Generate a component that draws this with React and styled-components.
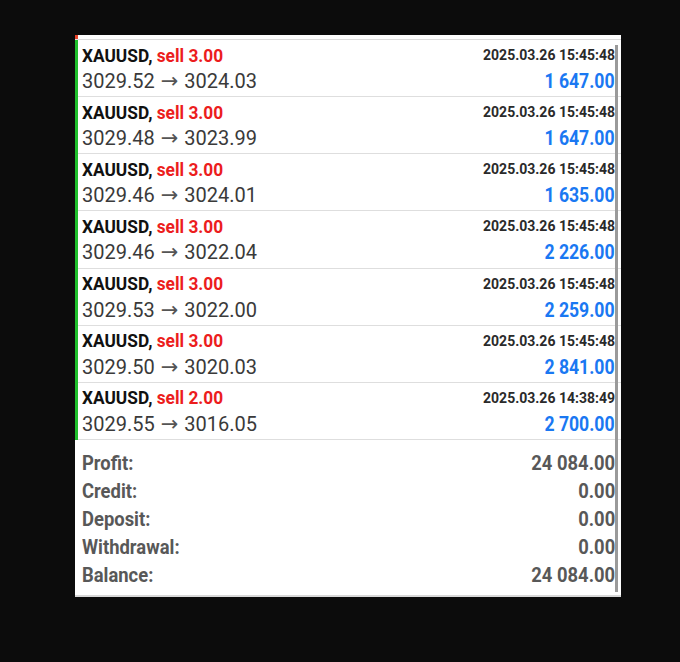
import React from 'react';
import styled, { createGlobalStyle } from 'styled-components';

const GlobalStyle = createGlobalStyle`
  html, body {
    margin: 0;
    padding: 0;
    background: #0c0c0c;
  }
  body {
    font-family: "Roboto", "Liberation Sans", sans-serif;
  }
`;

const trades = [
  { lots: '3.00', open: '3029.52', close: '3024.03', time: '2025.03.26 15:45:48', profit: '1 647.00' },
  { lots: '3.00', open: '3029.48', close: '3023.99', time: '2025.03.26 15:45:48', profit: '1 647.00' },
  { lots: '3.00', open: '3029.46', close: '3024.01', time: '2025.03.26 15:45:48', profit: '1 635.00' },
  { lots: '3.00', open: '3029.46', close: '3022.04', time: '2025.03.26 15:45:48', profit: '2 226.00' },
  { lots: '3.00', open: '3029.53', close: '3022.00', time: '2025.03.26 15:45:48', profit: '2 259.00' },
  { lots: '3.00', open: '3029.50', close: '3020.03', time: '2025.03.26 15:45:48', profit: '2 841.00' },
  { lots: '2.00', open: '3029.55', close: '3016.05', time: '2025.03.26 14:38:49', profit: '2 700.00' },
];

const totals = [
  ['Profit:', '24 084.00'],
  ['Credit:', '0.00'],
  ['Deposit:', '0.00'],
  ['Withdrawal:', '0.00'],
  ['Balance:', '24 084.00'],
];

export default function App() {
  return (
    <>
      <GlobalStyle />
      <SPage>
        <SPanel>
          <STopStrip />
          <SList>
            {trades.map((t, i) => (
              <SRow key={i}>
                <SLine>
                  <STitle>
                    XAUUSD, <SSell>sell {t.lots}</SSell>
                  </STitle>
                  <STime>{t.time}</STime>
                </SLine>
                <SLine>
                  <SPrice>
                    {t.open} <SArrow>→</SArrow> {t.close}
                  </SPrice>
                  <SProfit>{t.profit}</SProfit>
                </SLine>
              </SRow>
            ))}
          </SList>
          <SSummary>
            {totals.map(([label, value]) => (
              <STotalRow key={label}>
                <SNarrow>{label}</SNarrow>
                <SNarrow $right>{value}</SNarrow>
              </STotalRow>
            ))}
          </SSummary>
          <SScrollbar />
        </SPanel>
      </SPage>
    </>
  );
}

const SPage = styled.div`
  padding: 35px 0 0 75px;
  height: 627px;
`;

const SPanel = styled.div`
  position: relative;
  width: 546px;
  background: #fff;
  border-bottom: 2px solid #d8d8d8;
`;

const STopStrip = styled.div`
  height: 4px;
  border-bottom: 1px solid #dcdcdc;
  background: linear-gradient(to right, #e8452c 0, #e8452c 3px, #fff 3px);
`;

const SList = styled.div`
  border-left: 3px solid #1fbf2c;
`;

const SRow = styled.div`
  box-sizing: border-box;
  height: 57.17px;
  padding: 2px 6px 0 4px;
  border-bottom: 1px solid #dedede;
  display: flex;
  flex-direction: column;
`;

const SLine = styled.div`
  display: flex;
  justify-content: space-between;
  align-items: center;
  height: 26px;
`;

const STitle = styled.div`
  font-weight: bold;
  font-size: 19px;
  color: #111;
  white-space: nowrap;
  transform: scaleX(0.91);
  transform-origin: left center;
`;

const SSell = styled.span`
  color: #ec1d1d;
`;

const STime = styled.div`
  font-weight: bold;
  font-size: 14px;
  color: #2a2a2a;
`;

const SPrice = styled.div`
  font-size: 20px;
  color: #3a3a3a;
  white-space: nowrap;
`;

const SArrow = styled.span`
  font-family: "DejaVu Sans", sans-serif;
  font-size: 21px;
  color: #555;
  margin: 0 1px;
`;

const SProfit = styled.div`
  font-weight: bold;
  font-size: 21px;
  color: #1a78f2;
  white-space: nowrap;
  transform: scaleX(0.84);
  transform-origin: right center;
`;

const SSummary = styled.div`
  padding: 9px 6px 6px 7px;
`;

const STotalRow = styled.div`
  display: flex;
  justify-content: space-between;
  height: 28px;
  align-items: center;
  font-weight: bold;
  font-size: 20px;
  color: #585858;
`;

const SNarrow = styled.span`
  white-space: nowrap;
  transform: scaleX(0.92);
  transform-origin: ${(p) => (p.$right ? 'right' : 'left')} center;
`;

const SScrollbar = styled.div`
  position: absolute;
  right: 3px;
  top: 10px;
  bottom: 3px;
  width: 3px;
  background: #9a9a9a;
`;
